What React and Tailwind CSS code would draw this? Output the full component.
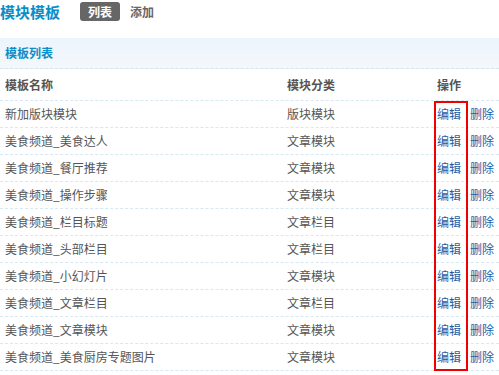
import React from 'react';

const rows = [
  ['新加版块模块', '版块模块'],
  ['美食频道_美食达人', '文章模块'],
  ['美食频道_餐厅推荐', '文章模块'],
  ['美食频道_操作步骤', '文章模块'],
  ['美食频道_栏目标题', '文章栏目'],
  ['美食频道_头部栏目', '文章栏目'],
  ['美食频道_小幻灯片', '文章模块'],
  ['美食频道_文章栏目', '文章栏目'],
  ['美食频道_文章模块', '文章模块'],
  ['美食频道_美食厨房专题图片', '文章模块'],
];

const font = { fontFamily: '"Noto Sans CJK SC", "Liberation Sans", sans-serif' };

export default function App() {
  return (
    <div
      className="relative w-[499px] h-[375px] bg-white overflow-hidden text-[12px] leading-none text-[#555]"
      style={font}
    >
      {/* Top bar */}
      <div className="flex items-center h-[22px] pt-[1px]">
        <span className="w-[60px] text-[15px] font-bold text-[#0b8ec8]">模块模板</span>
        <span className="ml-[20px] h-[19px] px-[8px] flex items-center rounded-[3px] bg-[#666] text-white font-bold">
          列表
        </span>
        <span className="ml-[10px] font-bold text-[#666]">添加</span>
      </div>

      {/* Section band */}
      <div className="mt-[16px] h-[31px] flex items-center pl-[5px] bg-gradient-to-b from-[#ecf4fc] to-[#f4f8fd] border-b border-dashed border-[#d6e4ee]">
        <span className="font-bold text-[#0b8ec8]">模板列表</span>
      </div>

      {/* Table header */}
      <div className="grid grid-cols-[282px_150px_1fr] h-[32px] items-center border-b border-dashed border-[#d6e8f4] font-bold">
        <div className="pl-[5px]">模板名称</div>
        <div className="pl-[5px]">模块分类</div>
        <div className="pl-[5px]">操作</div>
      </div>

      {/* Rows */}
      {rows.map(([name, type]) => (
        <div
          key={name}
          className="grid grid-cols-[282px_150px_1fr] h-[27px] items-center border-b border-dashed border-[#d6e8f4]"
        >
          <div className="pl-[5px]">{name}</div>
          <div className="pl-[5px]">{type}</div>
          <div className="pl-[5px] flex text-[#1d5fa6]">
            <span>编辑</span>
            <span className="ml-[9px]">删除</span>
          </div>
        </div>
      ))}

      {/* Highlight box */}
      <div className="absolute left-[434px] top-[101px] w-[34px] h-[270px] border-2 border-[#f00000]" />
    </div>
  );
}
